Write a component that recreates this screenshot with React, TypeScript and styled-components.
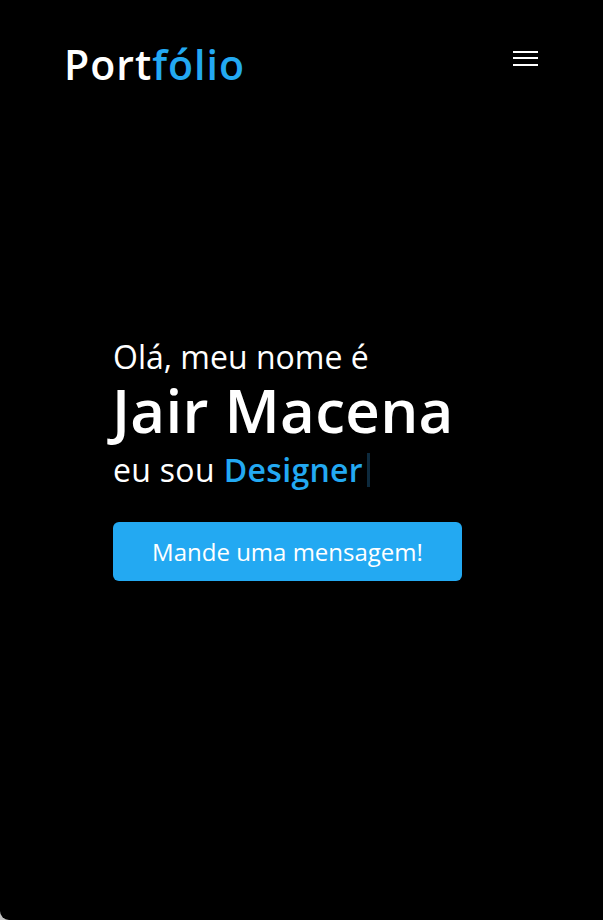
import React from "react";
import styled, { createGlobalStyle } from "styled-components";

const Global = createGlobalStyle`
  html, body { margin: 0; padding: 0; background: #000; }
  * { box-sizing: border-box; }
`;

const Frame = styled.div`
  width: 603px;
  height: 920px;
  display: flex;
  flex-direction: column;
  background: linear-gradient(to right, #c3c3c3 316px, #2b7a5c 316px);
  font-family: "Open Sans", "Noto Sans", sans-serif;
`;

const Screen = styled.div`
  flex: 1;
  background: #000;
  border-bottom-left-radius: 9px;
  display: flex;
  flex-direction: column;
`;

const Header = styled.header`
  display: flex;
  align-items: flex-start;
  justify-content: space-between;
  padding: 34px 65px 0 64px;
  height: 120px;
`;

const Logo = styled.h1`
  margin: 0;
  font-size: 41px;
  font-weight: 600;
  letter-spacing: 1px;
  color: #fff;
  line-height: 60px;
`;

const Accent = styled.span`
  color: #23a9f2;
`;

const Burger = styled.button`
  margin-top: 17px;
  background: none;
  border: none;
  padding: 0;
  width: 25px;
  display: flex;
  flex-direction: column;
  gap: 4.3px;
  cursor: pointer;
`;

const BurgerLine = styled.span`
  display: block;
  width: 25px;
  height: 2px;
  background: #fff;
`;

const Hero = styled.main`
  flex: 1;
  display: flex;
  flex-direction: column;
  align-items: flex-start;
  justify-content: center;
  padding: 0 0 120px 113px;
`;

const Greeting = styled.p`
  margin: 0;
  font-size: 32px;
  font-weight: 400;
  color: #fff;
  line-height: 34px;
`;

const Name = styled.h2`
  margin: 0 0 0 -1px;
  font-size: 60px;
  font-weight: 600;
  letter-spacing: 0.3px;
  color: #fff;
  line-height: 72px;
`;

const Role = styled.p`
  margin: 0;
  font-size: 32px;
  font-weight: 400;
  letter-spacing: 0.3px;
  color: #fff;
  line-height: 48px;
  display: flex;
  align-items: center;
`;

const RoleWord = styled.span`
  color: #23a9f2;
  font-weight: 600;
  margin-left: 9px;
`;

const Caret = styled.span`
  display: inline-block;
  width: 3px;
  height: 34px;
  background: #0d2a3d;
  margin-left: 4px;
`;

const CTA = styled.button`
  margin-top: 28px;
  width: 349px;
  height: 59px;
  border: none;
  border-radius: 6px;
  background: #23a9f2;
  color: #fff;
  font-family: inherit;
  font-size: 24px;
  font-weight: 400;
  cursor: pointer;
`;

export default function App() {
  return (
    <>
      <Global />
      <Frame>
        <Screen>
          <Header>
            <Logo>
              Port<Accent>fólio</Accent>
            </Logo>
            <Burger aria-label="menu">
              <BurgerLine />
              <BurgerLine />
              <BurgerLine />
            </Burger>
          </Header>
          <Hero>
            <Greeting>Olá, meu nome é</Greeting>
            <Name>Jair Macena</Name>
            <Role>
              eu sou<RoleWord>Designer</RoleWord>
              <Caret />
            </Role>
            <CTA>Mande uma mensagem!</CTA>
          </Hero>
        </Screen>
      </Frame>
    </>
  );
}
